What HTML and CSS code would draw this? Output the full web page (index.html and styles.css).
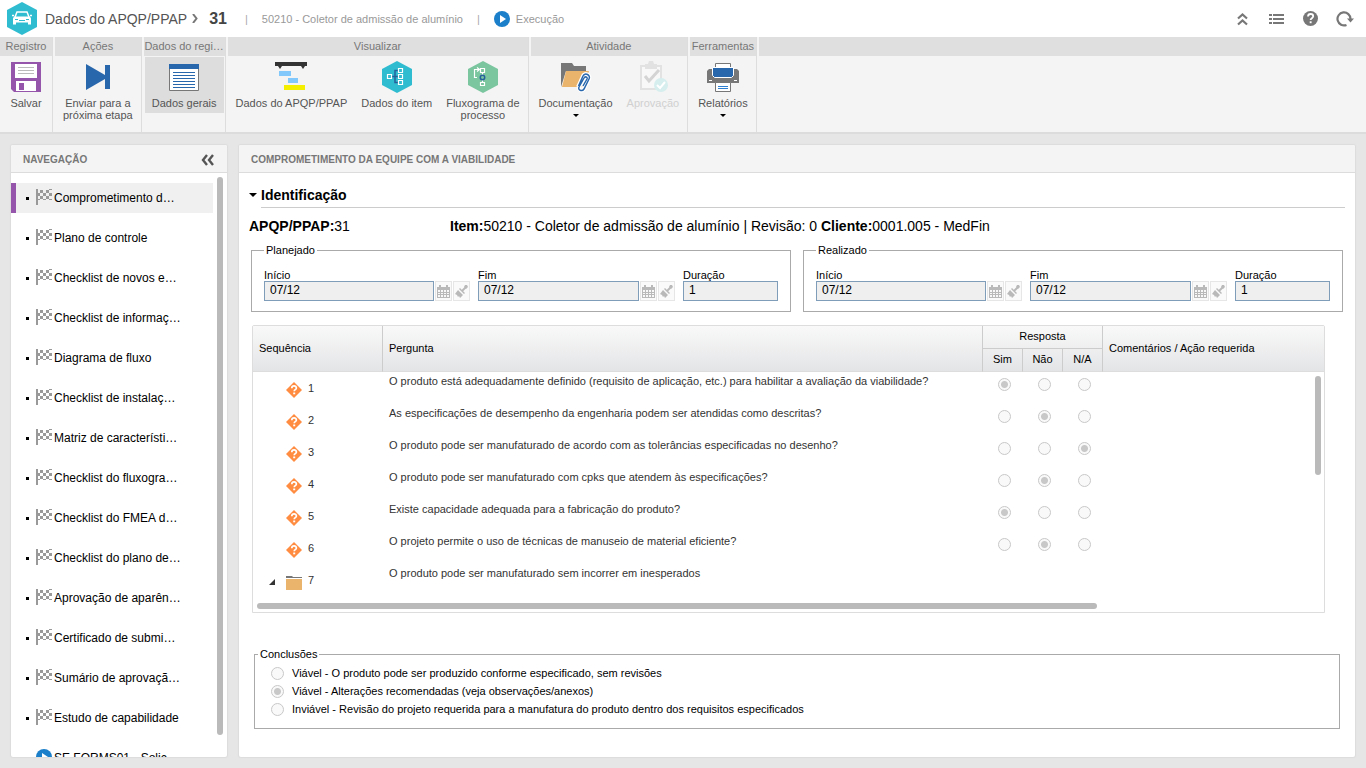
FILE: index.html
```
<!DOCTYPE html>
<html lang="pt-BR">
<head>
<meta charset="UTF-8">
<meta name="viewport" content="width=device-width, initial-scale=1.0">
<title>Dados do APQP/PPAP - 31</title>
<link rel="stylesheet" href="styles.css">
</head>
<body>
<svg class="sprite" aria-hidden="true">
 <symbol id="i-flag" viewBox="0 0 16 16"><path fill="#999" d="M0 0h2v16H0zM4 1h3v3H4zM10 1h3v3h-3zM2 4h2v3H2zM7 4h3v3H7zM13 0h3v1h-3zM13 4h3v3h-3zM4 7h3v3H4zM10 7h3v3h-3zM2 10h2v1H2zM7 10h3v1H7zM13 10h3v1h-3z"/></symbol>
 <symbol id="i-play" viewBox="0 0 16 16"><circle cx="8" cy="8" r="8" fill="#1b7fc9"/><path fill="#fff" d="M6 4l6 4-6 4z"/></symbol>
 <symbol id="i-question" viewBox="0 0 16 16"><path fill="#ff8c40" d="M8 0l8 8-8 8-8-8z"/><path d="M5.800 6.200c0-3 4.600-2.900 4.600-.2 0 1.700-2.200 1.600-2.200 3.200" fill="none" stroke="#fff" stroke-width="1.700"/><path fill="#fff" d="M7.200 10.500h2v1.800h-2z"/></symbol>
 <symbol id="i-cal" viewBox="0 0 13 13"><path fill="#b9b9b9" d="M0 2h2V0h2v2h5V0h2v2h2v11H0z"/><path fill="#f8f8f8" d="M1 5h2v2H1zM4 5h2v2H4zM7 5h2v2H7zM10 5h2v2h-2zM1 8h2v1H1zM4 8h2v1H4zM7 8h2v1H7zM10 8h2v1h-2zM1 10h2v2H1zM4 10h2v2H4zM7 10h2v2H7zM10 10h2v2h-2z"/></symbol>
 <symbol id="i-brush" viewBox="0 0 13 13"><path d="M7 6l4-4" stroke="#b9b9b9" stroke-width="2"/><path fill="#b9b9b9" d="M10 0h2l1 2-2 2-2-2zM4 4l1-1 5 5-1 1zM3 5l5 5-3 3-1-2-1 1-1-2-2-1z"/></symbol>
</svg>

<header class="topbar">
 <svg class="logo" viewBox="0 0 30 33"><path fill="#2fbcd0" d="M15 0l15 8v17l-15 8-15-8V8z"/><path d="M8 15l2-5h10l2 5M5 13.500h2M23 13.500h2" fill="none" stroke="#fff" stroke-width="1.500"/><path fill="#fff" d="M7 14.500h16l1 2v6h-3v-2H9v2H6v-6z"/><path stroke="#2fbcd0" d="M8 17.500h3M19 17.500h3M12 18.500h6"/></svg>
 <h1 class="page-title">Dados do APQP/PPAP</h1>
 <svg class="crumb" viewBox="0 0 6 9"><path d="M1 0l3.500 4.500L1 9" fill="none" stroke="#777" stroke-width="2"/></svg>
 <strong class="record">31</strong>
 <span class="bar">|</span>
 <span class="subtitle">50210 - Coletor de admissão de alumínio</span>
 <span class="bar bar-end">|</span>
 <svg class="play" viewBox="0 0 16 16"><use href="#i-play"/></svg>
 <span class="subtitle">Execução</span>
 <div class="top-actions">
  <button aria-label="Recolher"><svg viewBox="0 0 18 18"><path d="M4 8.500l4.500-4 4.500 4M4 14.500l4.500-4 4.500 4" fill="none" stroke="#777" stroke-width="2.200"/></svg></button>
  <button aria-label="Lista"><svg viewBox="0 0 18 18"><path fill="#777" d="M1 4h3v2H1zM5 4h11v2H5zM1 8h3v2H1zM5 8h11v2H5zM1 12h3v2H1zM5 12h11v2H5z"/></svg></button>
  <button aria-label="Ajuda"><svg viewBox="0 0 18 18"><circle cx="8.500" cy="8.500" r="7.500" fill="#777"/><path d="M6 6.500c0-3.400 5.200-3.200 5.200-.2 0 1.800-2.600 1.900-2.600 3.700" fill="none" stroke="#fff" stroke-width="1.800"/><path fill="#fff" d="M7.700 11.300h1.900v1.900H7.700z"/></svg></button>
  <button aria-label="Atualizar"><svg viewBox="0 0 18 18"><path d="M10.500 14.900A6.500 6.500 0 1 1 14.500 9" fill="none" stroke="#777" stroke-width="2.200"/><path fill="#777" d="M11 8.500h7l-3.500 4z"/></svg></button>
 </div>
</header>

<div class="ribbon">
 <section class="group">
  <h2>Registro</h2>
  <div class="tools">
   <button class="tool"><svg viewBox="0 0 32 32"><path fill="#9455ab" d="M1 1h30v30H4l-3-3z"/><path fill="#fff" d="M5 3h22v14H5zM6 20h20v10H6z"/><path stroke="#bbb" d="M8 6.500h16M8 9.500h16M8 12.500h16"/><path fill="#9455ab" d="M9 22h5v7H9z"/></svg>Salvar</button>
  </div>
 </section>
 <section class="group">
  <h2>Ações</h2>
  <div class="tools">
   <button class="tool"><svg viewBox="0 0 32 32"><path fill="#2967ad" d="M4 3l19 11V4h5v24h-5V18L4 29z"/></svg>Enviar para a<br>próxima etapa</button>
  </div>
 </section>
 <section class="group">
  <h2>Dados do regi…</h2>
  <div class="tools">
   <button class="tool selected"><svg viewBox="0 0 32 32"><path fill="#fff" stroke="#777" d="M1.500 3.500h29v26h-29z"/><path fill="#2967ad" d="M1 3h30v5H1z"/><path stroke="#2967ad" d="M5 11.500h22M5 14.500h22M5 17.500h22M5 20.500h22M5 23.500h22M5 26.500h22"/></svg>Dados gerais</button>
  </div>
 </section>
 <section class="group">
  <h2>Visualizar</h2>
  <div class="tools">
   <button class="tool"><svg viewBox="0 0 32 32"><path fill="#333" d="M0 1h32v4h-2l-2 3-2-3H7L5 8 3 5H0z"/><path fill="#83c8fb" d="M4 10h12v5H4zM13 17h10v5H13z"/><path fill="#f4ef00" d="M9 24h21v5H9z"/></svg>Dados do APQP/PPAP</button>
   <button class="tool"><svg viewBox="0 0 32 32"><path fill="#2fbcd0" d="M16 0l15 8v16l-15 8-15-8V8z"/><path d="M11 15.500h7M18 9.500h-4v12h4" fill="none" stroke="#26619c" stroke-width="1.500"/><path d="M6.500 13.500h4v4h-4zM17.500 7.500h4v4h-4zM17.500 13.500h4v4h-4zM17.500 19.500h4v4h-4z" fill="#2fbcd0" stroke="#fff" stroke-width="1.200"/></svg>Dados do item</button>
   <button class="tool"><svg viewBox="0 0 32 32"><path fill="#7bc59f" d="M16 0l15 8v16l-15 8-15-8V8z"/><path d="M10 16.500H7.500v-8H12M10 6.500l2.500 2-2.500 2M15.500 11v3M15.500 19v3" fill="none" stroke="#fff" stroke-width="1.200"/><path d="M13.500 7.500h4v4h-4zM13.500 21.500h4v3h-4z" fill="none" stroke="#fff" stroke-width="1.200"/><circle cx="15.500" cy="16.500" r="2.200" fill="#7bc59f" stroke="#26619c" stroke-width="1.500"/></svg>Fluxograma de<br>processo</button>
  </div>
 </section>
 <section class="group">
  <h2>Atividade</h2>
  <div class="tools">
   <button class="tool more"><svg viewBox="0 0 32 32"><path fill="#777" d="M1 2h11l2 3h12v5H6L1 26z"/><path fill="#eab46c" d="M6 10h23l-5 16H2z"/><path d="M18 26l5-11c2-4 8-1 6 3l-5 10c-2 3-6 1-5-2l5-9c1-2 4-1 3 1l-4 8" fill="none" stroke="#fff" stroke-width="4"/><path d="M18.500 25l4.500-10c2-4 8-1 6 3l-5 10c-2 3-6.500 1-5-2l5-9c1-2 4-1 3 1l-4 7" fill="none" stroke="#2967ad" stroke-width="1.500"/></svg>Documentação</button>
   <button class="tool" disabled><svg viewBox="0 0 32 32"><path d="M4 5h20v23H4z" fill="#f8f8f8" stroke="#e2e2e2" stroke-width="2"/><path fill="#e2e2e2" d="M8 3h3l1-3h4l1 3h3v5H8z"/><path d="M8 15l4 5 10-11" fill="none" stroke="#d4d4d4" stroke-width="3"/><circle cx="24" cy="24" r="7" fill="#d6eeee"/><path d="M20 24l3 3 5-6" fill="none" stroke="#fff" stroke-width="2"/></svg>Aprovação</button>
  </div>
 </section>
 <section class="group">
  <h2>Ferramentas</h2>
  <div class="tools">
   <button class="tool more"><svg viewBox="0 0 32 32"><path fill="#fff" stroke="#777" d="M8.500 2.500h15v8h-15z"/><path fill="#777" d="M2 8h28l2 2v12H0V10z"/><path fill="#2967ad" stroke="#fff" d="M5.500 6.500h21v8l-2 2h-17l-2-2z"/><path fill="#fff" d="M2 19h3v1H2zM27 19h3v1h-3z"/><path fill="#fff" stroke="#777" d="M8.500 21.500h15v9h-15z"/><path stroke="#2f80d0" d="M11 25.500h10M11 27.500h10"/></svg>Relatórios</button>
  </div>
 </section>
</div>

<div class="workspace">
 <aside class="panel nav-panel">
  <div class="panel-head"><h2>NAVEGAÇÃO</h2><button class="collapse" aria-label="Recolher navegação"><svg viewBox="0 0 14 12"><path d="M6 1L2 6l4 5M12 1L8 6l4 5" fill="none" stroke="#555" stroke-width="2.400"/></svg></button></div>
  <nav class="nav-body">
   <ul class="nav-list">
    <li class="current"><a href="#"><svg><use href="#i-flag"/></svg>Comprometimento d…</a></li>
    <li><a href="#"><svg><use href="#i-flag"/></svg>Plano de controle</a></li>
    <li><a href="#"><svg><use href="#i-flag"/></svg>Checklist de novos e…</a></li>
    <li><a href="#"><svg><use href="#i-flag"/></svg>Checklist de informaç…</a></li>
    <li><a href="#"><svg><use href="#i-flag"/></svg>Diagrama de fluxo</a></li>
    <li><a href="#"><svg><use href="#i-flag"/></svg>Checklist de instalaç…</a></li>
    <li><a href="#"><svg><use href="#i-flag"/></svg>Matriz de característi…</a></li>
    <li><a href="#"><svg><use href="#i-flag"/></svg>Checklist do fluxogra…</a></li>
    <li><a href="#"><svg><use href="#i-flag"/></svg>Checklist do FMEA d…</a></li>
    <li><a href="#"><svg><use href="#i-flag"/></svg>Checklist do plano de…</a></li>
    <li><a href="#"><svg><use href="#i-flag"/></svg>Aprovação de aparên…</a></li>
    <li><a href="#"><svg><use href="#i-flag"/></svg>Certificado de submi…</a></li>
    <li><a href="#"><svg><use href="#i-flag"/></svg>Sumário de aprovaçã…</a></li>
    <li><a href="#"><svg><use href="#i-flag"/></svg>Estudo de capabilidade</a></li>
    <li><a href="#"><svg><use href="#i-play"/></svg>SE FORMS01 - Solic…</a></li>
   </ul>
   <div class="thumb thumb-nav"></div>
  </nav>
 </aside>

 <main class="panel main-panel">
  <div class="panel-head"><h2>COMPROMETIMENTO DA EQUIPE COM A VIABILIDADE</h2></div>
  <div class="main-body">
   <h3 class="section-title"><span class="caret"></span><span class="section-text">Identificação</span></h3>
   <div class="info">
    <span class="info-id"><b>APQP/PPAP:</b>31</span>
    <span><b>Item:</b>50210 - Coletor de admissão de alumínio | Revisão: 0 <b>Cliente:</b>0001.005 - MedFin</span>
   </div>

   <div class="periods">
    <fieldset class="period">
     <legend>Planejado</legend>
     <div class="fields">
      <div class="field"><label for="p-ini">Início</label><div class="entry"><input id="p-ini" type="text" value="07/12" readonly><button disabled aria-label="Calendário"><svg><use href="#i-cal"/></svg></button><button disabled aria-label="Limpar"><svg><use href="#i-brush"/></svg></button></div></div>
      <div class="field"><label for="p-fim">Fim</label><div class="entry"><input id="p-fim" type="text" value="07/12" readonly><button disabled aria-label="Calendário"><svg><use href="#i-cal"/></svg></button><button disabled aria-label="Limpar"><svg><use href="#i-brush"/></svg></button></div></div>
      <div class="field"><label for="p-dur">Duração</label><div class="entry"><input id="p-dur" type="text" value="1" readonly></div></div>
     </div>
    </fieldset>
    <fieldset class="period">
     <legend>Realizado</legend>
     <div class="fields">
      <div class="field"><label for="r-ini">Início</label><div class="entry"><input id="r-ini" type="text" value="07/12" readonly><button disabled aria-label="Calendário"><svg><use href="#i-cal"/></svg></button><button disabled aria-label="Limpar"><svg><use href="#i-brush"/></svg></button></div></div>
      <div class="field"><label for="r-fim">Fim</label><div class="entry"><input id="r-fim" type="text" value="07/12" readonly><button disabled aria-label="Calendário"><svg><use href="#i-cal"/></svg></button><button disabled aria-label="Limpar"><svg><use href="#i-brush"/></svg></button></div></div>
      <div class="field"><label for="r-dur">Duração</label><div class="entry"><input id="r-dur" type="text" value="1" readonly></div></div>
     </div>
    </fieldset>
   </div>

   <div class="grid">
    <table>
     <colgroup><col class="c-seq"><col class="c-ask"><col class="c-opt"><col class="c-opt"><col class="c-opt"><col></colgroup>
     <thead>
      <tr><th rowspan="2">Sequência</th><th rowspan="2">Pergunta</th><th colspan="3" class="answer">Resposta</th><th rowspan="2">Comentários / Ação requerida</th></tr>
      <tr class="options"><th>Sim</th><th>Não</th><th>N/A</th></tr>
     </thead>
     <tbody>
      <tr><td class="seq"><svg><use href="#i-question"/></svg>1</td><td class="ask">O produto está adequadamente definido (requisito de aplicação, etc.) para habilitar a avaliação da viabilidade?</td><td class="opt"><input type="radio" name="q1" aria-label="1 Sim" disabled checked></td><td class="opt"><input type="radio" name="q1" aria-label="1 Não" disabled></td><td class="opt"><input type="radio" name="q1" aria-label="1 N/A" disabled></td><td></td></tr>
      <tr><td class="seq"><svg><use href="#i-question"/></svg>2</td><td class="ask">As especificações de desempenho da engenharia podem ser atendidas como descritas?</td><td class="opt"><input type="radio" name="q2" aria-label="2 Sim" disabled></td><td class="opt"><input type="radio" name="q2" aria-label="2 Não" disabled checked></td><td class="opt"><input type="radio" name="q2" aria-label="2 N/A" disabled></td><td></td></tr>
      <tr><td class="seq"><svg><use href="#i-question"/></svg>3</td><td class="ask">O produto pode ser manufaturado de acordo com as tolerâncias especificadas no desenho?</td><td class="opt"><input type="radio" name="q3" aria-label="3 Sim" disabled></td><td class="opt"><input type="radio" name="q3" aria-label="3 Não" disabled></td><td class="opt"><input type="radio" name="q3" aria-label="3 N/A" disabled checked></td><td></td></tr>
      <tr><td class="seq"><svg><use href="#i-question"/></svg>4</td><td class="ask">O produto pode ser manufaturado com cpks que atendem às especificações?</td><td class="opt"><input type="radio" name="q4" aria-label="4 Sim" disabled></td><td class="opt"><input type="radio" name="q4" aria-label="4 Não" disabled checked></td><td class="opt"><input type="radio" name="q4" aria-label="4 N/A" disabled></td><td></td></tr>
      <tr><td class="seq"><svg><use href="#i-question"/></svg>5</td><td class="ask">Existe capacidade adequada para a fabricação do produto?</td><td class="opt"><input type="radio" name="q5" aria-label="5 Sim" disabled checked></td><td class="opt"><input type="radio" name="q5" aria-label="5 Não" disabled></td><td class="opt"><input type="radio" name="q5" aria-label="5 N/A" disabled></td><td></td></tr>
      <tr><td class="seq"><svg><use href="#i-question"/></svg>6</td><td class="ask">O projeto permite o uso de técnicas de manuseio de material eficiente?</td><td class="opt"><input type="radio" name="q6" aria-label="6 Sim" disabled></td><td class="opt"><input type="radio" name="q6" aria-label="6 Não" disabled checked></td><td class="opt"><input type="radio" name="q6" aria-label="6 N/A" disabled></td><td></td></tr>
      <tr><td class="seq branch"><svg class="twist" viewBox="0 0 6 6"><path fill="#333" d="M6 0v6H0z"/></svg><svg viewBox="0 0 16 16"><path fill="#777" d="M0 2h6l1 1h9v1H0z"/><path fill="#eab46c" d="M0 5h16v11H0z"/></svg>7</td><td class="ask">O produto pode ser manufaturado sem incorrer em inesperados</td><td></td><td></td><td></td><td></td></tr>
     </tbody>
    </table>
    <div class="thumb thumb-v"></div>
    <div class="thumb thumb-h"></div>
   </div>

   <fieldset class="conclusions">
    <legend>Conclusões</legend>
    <label><input type="radio" name="conc" disabled>Viável - O produto pode ser produzido conforme especificado, sem revisões</label>
    <label><input type="radio" name="conc" disabled checked>Viável - Alterações recomendadas (veja observações/anexos)</label>
    <label><input type="radio" name="conc" disabled>Inviável - Revisão do projeto requerida para a manufatura do produto dentro dos requisitos especificados</label>
   </fieldset>
  </div>
 </main>
</div>
</body>
</html>
```
FILE: styles.css
```
*{box-sizing:border-box}
body{margin:0;height:100vh;display:flex;flex-direction:column;overflow:hidden;background:#e6e6e6;color:#000;font:11px/12px "Liberation Sans",Arial,sans-serif}
h1,h2,h3,ul{margin:0;padding:0}
button{font:inherit;color:inherit;border:0;background:none;padding:0}
svg{flex:none}
.sprite{position:absolute;width:0;height:0}

/* top bar */
.topbar{display:flex;align-items:center;height:37px;padding:0 12px 0 7px;background:#fff;flex:none}
.logo{width:30px;height:33px}
.page-title{margin-left:8px;font-size:14px;line-height:20px;font-weight:normal;color:#555}
.crumb{width:6px;height:9px;margin:0 11px 0 5px}
.record{font-size:16px;line-height:20px;color:#444}
.bar{margin:0 14px 0 18px;color:#aaa}
.bar-end{margin:0 14px}
.subtitle{color:#999;line-height:16px}
.play{width:16px;height:16px;margin-right:6px}
.top-actions{display:flex;gap:16px;margin-left:auto}
.top-actions button{width:18px;height:18px}
.top-actions svg{display:block;width:18px;height:18px}

/* ribbon */
.ribbon{display:flex;height:97px;background:#f4f4f4;border-bottom:2px solid #dcdcdc;flex:none}
.ribbon::after{content:"";flex:1;height:19px;background:#dfdfdf}
.group{display:flex;flex-direction:column;border-right:1px solid #ddd;margin-right:2px;min-width:53px}
.group h2{flex:none;width:0;min-width:100%;height:19px;background:#dfdfdf;font-size:11px;line-height:19px;font-weight:normal;color:#777;text-align:center;white-space:nowrap}
.tools{display:flex;justify-content:center;padding:1px}
.tool{display:flex;flex-direction:column;align-items:center;height:74px;padding:4px 7px 0;color:#555}
.tool svg{width:32px;height:32px;margin-bottom:4px}
.tool.selected{height:56px;background:#ddd}
.tool:disabled{color:#d0d0d0}
.tool.more::after{content:"";margin-top:5px;border:3px solid transparent;border-top-color:#000}

/* panels */
.workspace{display:flex;flex:1;min-height:0;gap:12px;padding:11px 11px 11px 11px}
.panel{display:flex;flex-direction:column;background:#fff;border-radius:2px;box-shadow:0 0 1px 1px #dcdcdc;overflow:hidden}
.nav-panel{width:216px;flex:none}
.main-panel{flex:1;min-width:0}
.panel-head{display:flex;align-items:center;justify-content:space-between;height:28px;padding:2px 12px 0;background:#f4f4f4;border-bottom:1px solid #dcdcdc;flex:none}
.panel-head h2{font-size:10px;color:#777}
.collapse svg{display:block;width:14px;height:12px}
.nav-body{position:relative;flex:1;min-height:0;overflow:hidden}
.nav-list{display:flex;flex-direction:column;gap:10px;padding:10px 14px 0 0;list-style:none}
.nav-list li{height:30px;border-left:5px solid transparent;flex:none}
.nav-list .current{background:#f0f0f0;border-left-color:#9455ab}
.nav-list a{display:flex;align-items:center;height:30px;padding-left:10px;font-size:12px;color:#000;text-decoration:none;white-space:nowrap}
.nav-list a::before{content:"";width:3px;height:3px;margin-right:7px;background:#000}
.nav-list svg{width:16px;height:16px;margin:0 2px 2px 0}
.thumb{position:absolute;border-radius:3px;background:#bababa}
.thumb-nav{top:4px;right:4px;width:6px;bottom:22px}

/* form */
.main-body{padding:14px 12px 0 12px}
.section-title{display:flex;align-items:center;margin:0 -2px;font-size:14px;line-height:16px}
.caret{width:8px;border:4px solid transparent;border-top-color:#000;border-bottom:0;margin:0 4px 6px 0}
.section-text{flex:1;padding-bottom:4px;border-bottom:1px solid #ccc}
.info{display:flex;margin:10px 0 0 -2px;font-size:14px;line-height:16px}
.info-id{width:201px;flex:none}
fieldset{min-width:0;margin:0;border:1px solid #aaa}
legend{padding:0 2px}
.periods{display:grid;grid-template-columns:1fr 1fr;gap:12px;margin-top:10px}
.period{padding:13px 12px 10px}
.fields{display:grid;grid-template-columns:206fr 197fr 95fr;gap:8px}
.field{min-width:0}
.field label{display:block}
.entry{display:flex;gap:1px}
.entry input{flex:1;min-width:0;height:20px;padding:0 5px 2px;border:1px solid #7f9db9;background:#efefef;font:12px "Liberation Sans",Arial,sans-serif;color:#000}
.entry button{display:flex;align-items:center;justify-content:center;width:17px;height:20px;border:1px solid #e6e6e6;background:#fafafa;flex:none}
.entry svg{width:13px;height:13px}

/* questions grid */
.grid{position:relative;height:288px;margin:13px 18px 0 1px;border:1px solid #ddd;border-radius:2px 2px 0 0;overflow:hidden}
table{width:100%;table-layout:fixed;border-collapse:separate;border-spacing:0}
.c-seq{width:129px}
.c-ask{width:600px}
.c-opt{width:40px}
thead{background:linear-gradient(#f9f9f9,#e3e4e6)}
th{padding:0 6px 2px;font-weight:normal;text-align:left;border-left:1px solid #ccc;border-bottom:1px solid #ddd}
tr:first-child th:first-child{padding-left:6px;border-left:0}
.options th,.options:last-child th:first-child{height:23px;padding:0 0 3px;text-align:center}
th.answer{height:23px;text-align:center;border-bottom-color:#ccc}
td{height:32px;padding:0;vertical-align:top}
.seq{padding:10px 0 0 33px;color:#333}
.seq svg{width:16px;height:16px;margin-right:6px;vertical-align:-6px}
.seq.branch{padding-left:16px}
.seq .twist{width:6px;height:6px;margin-right:11px;vertical-align:-1px}
.ask{padding:3px 7px;color:#333}
.opt{padding:6px 0 0 16px}
input[type=radio]{appearance:none;display:block;width:13px;height:13px;margin:0;border:1px solid #c8c8c8;border-radius:50%;background:#f9f9f9;flex:none}
input[type=radio]:checked{background:radial-gradient(circle,#c8c8c8 0 3px,#f9f9f9 4px)}
.thumb-v{top:50px;right:3px;width:6px;height:99px}
.thumb-h{left:4px;bottom:3px;width:840px;height:6px}

.conclusions{display:flex;flex-direction:column;gap:2px;margin:35px 3px 0;padding:5px 16px 11px;border-color:#aaa}
.conclusions legend{margin-left:-13px}
.conclusions label{display:flex;align-items:center;gap:8px;height:16px}
```
